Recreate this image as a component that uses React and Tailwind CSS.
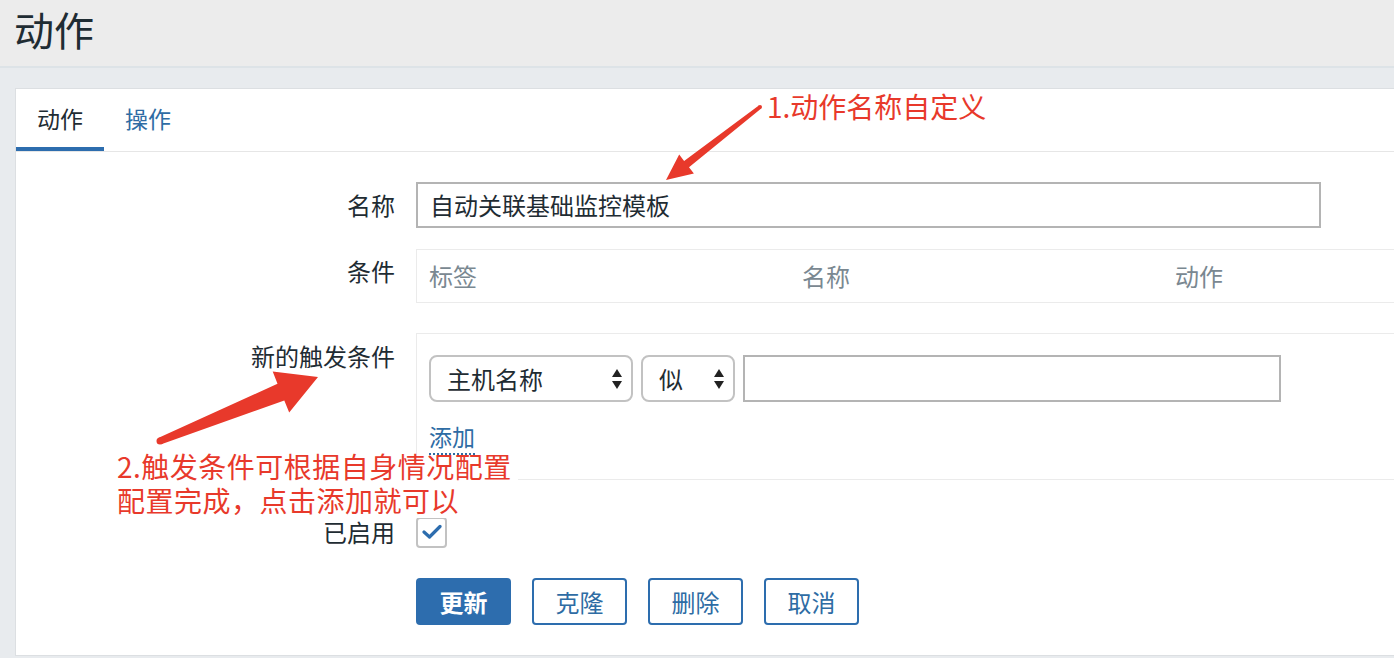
import React from 'react';

const BLUE = '#2d6dae';

function arrowPoints(tx, ty, hx, hy, headLen, headHalf, tailHalf, neckHalf) {
  const dx = hx - tx;
  const dy = hy - ty;
  const len = Math.hypot(dx, dy);
  const ux = dx / len;
  const uy = dy / len;
  const nx = -uy;
  const ny = ux;
  const bx = hx - ux * headLen;
  const by = hy - uy * headLen;
  const pts = [
    [tx + nx * tailHalf, ty + ny * tailHalf],
    [bx + nx * neckHalf, by + ny * neckHalf],
    [bx + nx * headHalf, by + ny * headHalf],
    [hx, hy],
    [bx - nx * headHalf, by - ny * headHalf],
    [bx - nx * neckHalf, by - ny * neckHalf],
    [tx - nx * tailHalf, ty - ny * tailHalf],
  ];
  return pts.map((p) => p.map((v) => v.toFixed(1)).join(',')).join(' ');
}

function SelectArrows() {
  return (
    <svg width="12" height="22" viewBox="0 0 12 22" className="shrink-0">
      <path d="M6 1 L11 9 L1 9 Z" fill="#222" />
      <path d="M6 21 L11 13 L1 13 Z" fill="#222" />
    </svg>
  );
}

function Label({ children, className = '' }) {
  return (
    <div className={`w-[400px] shrink-0 pr-[21px] text-right text-[24px] leading-[32px] text-[#1f2c33] ${className}`}>
      {children}
    </div>
  );
}

export default function App() {
  return (
    <div
      className="relative h-[658px] w-[1394px] overflow-hidden bg-[#e8ebee]"
      style={{ fontFamily: '"Noto Sans CJK SC", "Noto Sans", sans-serif' }}
    >
      {/* page header */}
      <div className="flex h-[66px] items-center bg-[#ececec] pb-[8px] pl-[14px]">
        <h1 className="text-[40px] leading-none text-[#1f2c33]">动作</h1>
      </div>
      <div className="h-[2px] bg-[#dde3e7]" />

      <div className="pl-[15px] pt-[20px]">
        <div className="h-[568px] border-t border-l border-b border-[#dcdfe2] bg-white">
          {/* tabs */}
          <div className="flex h-[63px] items-end border-b border-[#e6e6e6]">
            <div className="flex h-full w-[88px] flex-col items-center">
              <div className="flex flex-1 items-center text-[23px] text-[#1f2c33]">动作</div>
              <div className="h-[4px] w-full" style={{ backgroundColor: BLUE }} />
            </div>
            <div className="flex h-full items-center pl-[21px] pb-[4px] text-[23px] text-[#2e6ca4]">操作</div>
          </div>

          {/* form */}
          <div className="flex flex-col pt-[30px]">
            <div className="flex items-start">
              <Label className="pt-[7px]">名称</Label>
              <div className="flex h-[46px] w-[905px] items-center border-2 border-[#b4b4b4] pl-[12px] text-[24px] text-[#1f2c33]">
                自动关联基础监控模板
              </div>
            </div>

            <div className="mt-[21px] flex items-start">
              <Label className="pt-[6px]">条件</Label>
              <div className="grid h-[54px] flex-1 grid-cols-[373px_373px_1fr] items-center border border-r-0 border-[#ebebeb] text-[24px] text-[#7a8891]">
                <span className="pl-[12px]">标签</span>
                <span className="pl-[12px]">名称</span>
                <span className="pl-[12px]">动作</span>
              </div>
            </div>

            <div className="mt-[30px] flex items-start">
              <Label className="pt-[7px]">新的触发条件</Label>
              <div className="flex h-[147px] flex-1 flex-col border border-r-0 border-[#ebebeb] pl-[12px] pt-[21px]">
                <div className="flex items-center gap-[8px]">
                  <div className="flex h-[47px] w-[204px] items-center justify-between rounded-[8px] border-2 border-[#c2c2c2] pl-[16px] pr-[8px] text-[24px] text-[#1f2c33]">
                    主机名称
                    <SelectArrows />
                  </div>
                  <div className="flex h-[47px] w-[94px] items-center justify-between rounded-[8px] border-2 border-[#c2c2c2] pl-[16px] pr-[8px] text-[24px] text-[#1f2c33]">
                    似
                    <SelectArrows />
                  </div>
                  <div className="h-[47px] w-[538px] border-2 border-[#b4b4b4]" />
                </div>
                <div className="mt-[20px]">
                  <span className="border-b-2 border-dotted border-[#2e6ca4] text-[23px] leading-[28px] text-[#2e6ca4]">添加</span>
                </div>
              </div>
            </div>

            <div className="mt-[36px] flex items-center">
              <Label>已启用</Label>
              <div className="flex h-[31px] w-[31px] items-center justify-center rounded-[4px] border-2 border-[#c2c2c2]">
                <svg width="20" height="16" viewBox="0 0 20 16">
                  <path d="M2 8 L7.5 13 L18 2.5" fill="none" stroke={BLUE} strokeWidth="3.2" strokeLinecap="round" strokeLinejoin="round" />
                </svg>
              </div>
            </div>

            <div className="mt-[30px] flex gap-[21px] pl-[400px]">
              <button className="h-[47px] w-[95px] rounded-[4px] text-[24px] font-bold text-white" style={{ backgroundColor: BLUE }}>
                更新
              </button>
              {['克隆', '删除', '取消'].map((t) => (
                <button
                  key={t}
                  className="h-[47px] w-[95px] rounded-[4px] border-2 border-[#2d6dae] bg-white text-[24px] text-[#2e6ca4]"
                >
                  {t}
                </button>
              ))}
            </div>
          </div>
        </div>
      </div>

      {/* annotations */}
      <svg className="pointer-events-none absolute left-0 top-0" width="1394" height="658">
        <polygon points={arrowPoints(760, 107, 666, 180, 26, 12, 2, 4)} fill="#e8392b" />
        <circle cx="760" cy="107" r="2" fill="#e8392b" />
        <polygon points={arrowPoints(160, 441, 318, 377, 40, 22, 3.5, 9)} fill="#e8392b" />
        <circle cx="160" cy="441" r="3.5" fill="#e8392b" />
      </svg>
      <div className="absolute left-[767px] top-[89px] text-[28px] leading-[34px] text-[#e8392b]">1.动作名称自定义</div>
      <div className="absolute left-[110px] top-[456px] h-[62px] bg-white pl-[7px] pr-[6px] text-[28px] leading-[34px] tracking-[0.5px] text-[#e8392b]">
        <div className="-mt-[7px]">2.触发条件可根据自身情况配置</div>
        <div>配置完成，点击添加就可以</div>
      </div>
    </div>
  );
}
